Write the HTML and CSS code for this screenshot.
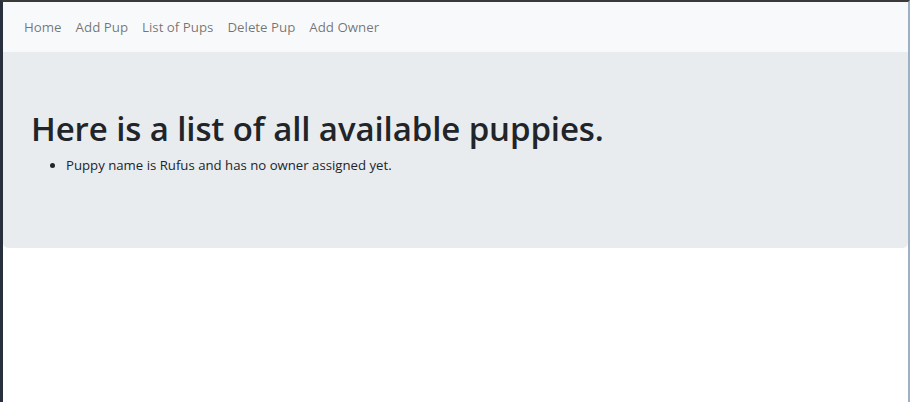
FILE: index.html
```html
<!DOCTYPE html>
<html>
<head>
<meta charset="utf-8">
<link rel="stylesheet" href="styles.css">
</head>
<body>
<div class="frame">
  <nav class="navbar">
    <a class="nav-link" href="#">Home</a>
    <a class="nav-link" href="#">Add Pup</a>
    <a class="nav-link" href="#">List of Pups</a>
    <a class="nav-link" href="#">Delete Pup</a>
    <a class="nav-link" href="#">Add Owner</a>
  </nav>
  <div class="jumbotron">
    <h1 class="title">Here is a list of all available puppies.</h1>
    <ul class="pups">
      <li>Puppy name is Rufus and has no owner assigned yet.</li>
    </ul>
  </div>
</div>
</body>
</html>
```
FILE: styles.css
```css
html, body {
  margin: 0;
  padding: 0;
  height: 100%;
  background: #ffffff;
}
body {
  font-family: "Open Sans", "Noto Sans", sans-serif;
  font-size: 14.4px;
  line-height: 1.5;
  color: #212529;
}
.frame {
  box-sizing: border-box;
  height: 402px;
  border-top: 2px solid #3a3a3a;
  border-left: 3px solid #27303c;
  border-right: 2px solid #9fb0c2;
  background: #ffffff;
}
.navbar {
  display: flex;
  align-items: center;
  padding: 7px 14px;
  background: #f8f9fa;
}
.nav-link {
  display: block;
  padding: 8px 7px 6px;
  color: rgba(0, 0, 0, 0.55);
  text-decoration: none;
  font-size: 13.3px;
  line-height: 21.6px;
}
.jumbotron {
  background: #e9ecef;
  border-radius: 0 0 5px 5px;
  padding: 57px 28px 58px;
}
.title {
  margin: 0 0 8px;
  font-size: 33px;
  font-weight: 600;
  line-height: 1.2;
  letter-spacing: -0.1px;
}
.pups {
  margin: 0 0 14px;
  padding-left: 35px;
  font-size: 13.2px;
}
```
